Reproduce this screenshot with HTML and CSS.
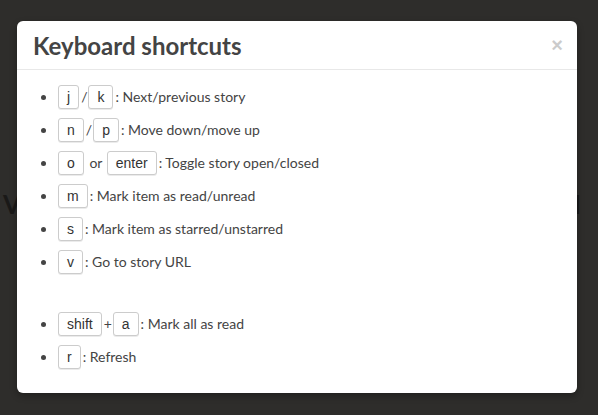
FILE: index.html
```html
<!DOCTYPE html>
<html>
<head>
<meta charset="utf-8">
<title>Keyboard shortcuts</title>
<link rel="stylesheet" href="styles.css">
</head>
<body>
<div class="page">
  <h1 class="page-title"><span>V</span><span>M</span></h1>
</div>
<div class="modal">
  <div class="modal-header">
    <h3 class="modal-title">Keyboard shortcuts</h3>
    <span class="close">×</span>
  </div>
  <div class="modal-body">
    <ul class="shortcuts">
      <li><kbd>j</kbd>/<kbd>k</kbd>: Next/previous story</li>
      <li><kbd>n</kbd>/<kbd>p</kbd>: Move down/move up</li>
      <li><kbd>o</kbd> or <kbd>enter</kbd>: Toggle story open/closed</li>
      <li><kbd>m</kbd>: Mark item as read/unread</li>
      <li><kbd>s</kbd>: Mark item as starred/unstarred</li>
      <li><kbd>v</kbd>: Go to story URL</li>
    </ul>
    <ul class="shortcuts">
      <li><kbd>shift</kbd>+<kbd>a</kbd>: Mark all as read</li>
      <li><kbd>r</kbd>: Refresh</li>
    </ul>
  </div>
</div>
</body>
</html>
```
FILE: styles.css
```css
html, body {
  margin: 0;
  padding: 0;
  height: 100%;
  background: #2e2d2b;
  font-family: Lato, "Open Sans", sans-serif;
  overflow: hidden;
}

.page {
  padding: 188px 17px 0 3px;
}

.page-title {
  margin: 0;
  display: flex;
  justify-content: space-between;
  font-size: 26px;
  font-weight: 700;
  color: #1a1918;
}

.modal {
  position: absolute;
  top: 21px;
  left: 17px;
  width: 560px;
  background: #fff;
  border-radius: 6px;
  box-shadow: 0 3px 7px rgba(0, 0, 0, 0.3);
}

.modal-header {
  display: flex;
  align-items: center;
  justify-content: space-between;
  height: 48px;
  padding: 0 14px 0 16px;
  border-bottom: 1px solid #e8e8e8;
}

.modal-title {
  margin: 0;
  font-size: 24px;
  font-weight: 700;
  color: #444;
}

.close {
  font-family: "Liberation Sans", Arial, sans-serif;
  font-size: 20px;
  font-weight: 700;
  color: #000;
  opacity: 0.2;
  line-height: 20px;
  margin-top: -1px;
}

.modal-body {
  padding: 15px;
}

.shortcuts {
  margin: 0 0 38px 25px;
  padding: 0;
  font-size: 14px;
  color: #444;
}

.shortcuts:last-child {
  margin-bottom: 0;
}

.shortcuts li {
  line-height: 24px;
  margin-bottom: 9px;
}

kbd {
  display: inline-block;
  box-sizing: border-box;
  height: 24px;
  line-height: 22px;
  padding: 0 8px;
  margin: 0 2px 0 1px;
  vertical-align: top;
  font-family: "Liberation Sans", Arial, sans-serif;
  font-size: 14px;
  color: #333;
  background: #fff;
  border: 1px solid #ccc;
  border-radius: 3px;
  box-shadow: 0 1px 0 rgba(0, 0, 0, 0.08);
}
```
